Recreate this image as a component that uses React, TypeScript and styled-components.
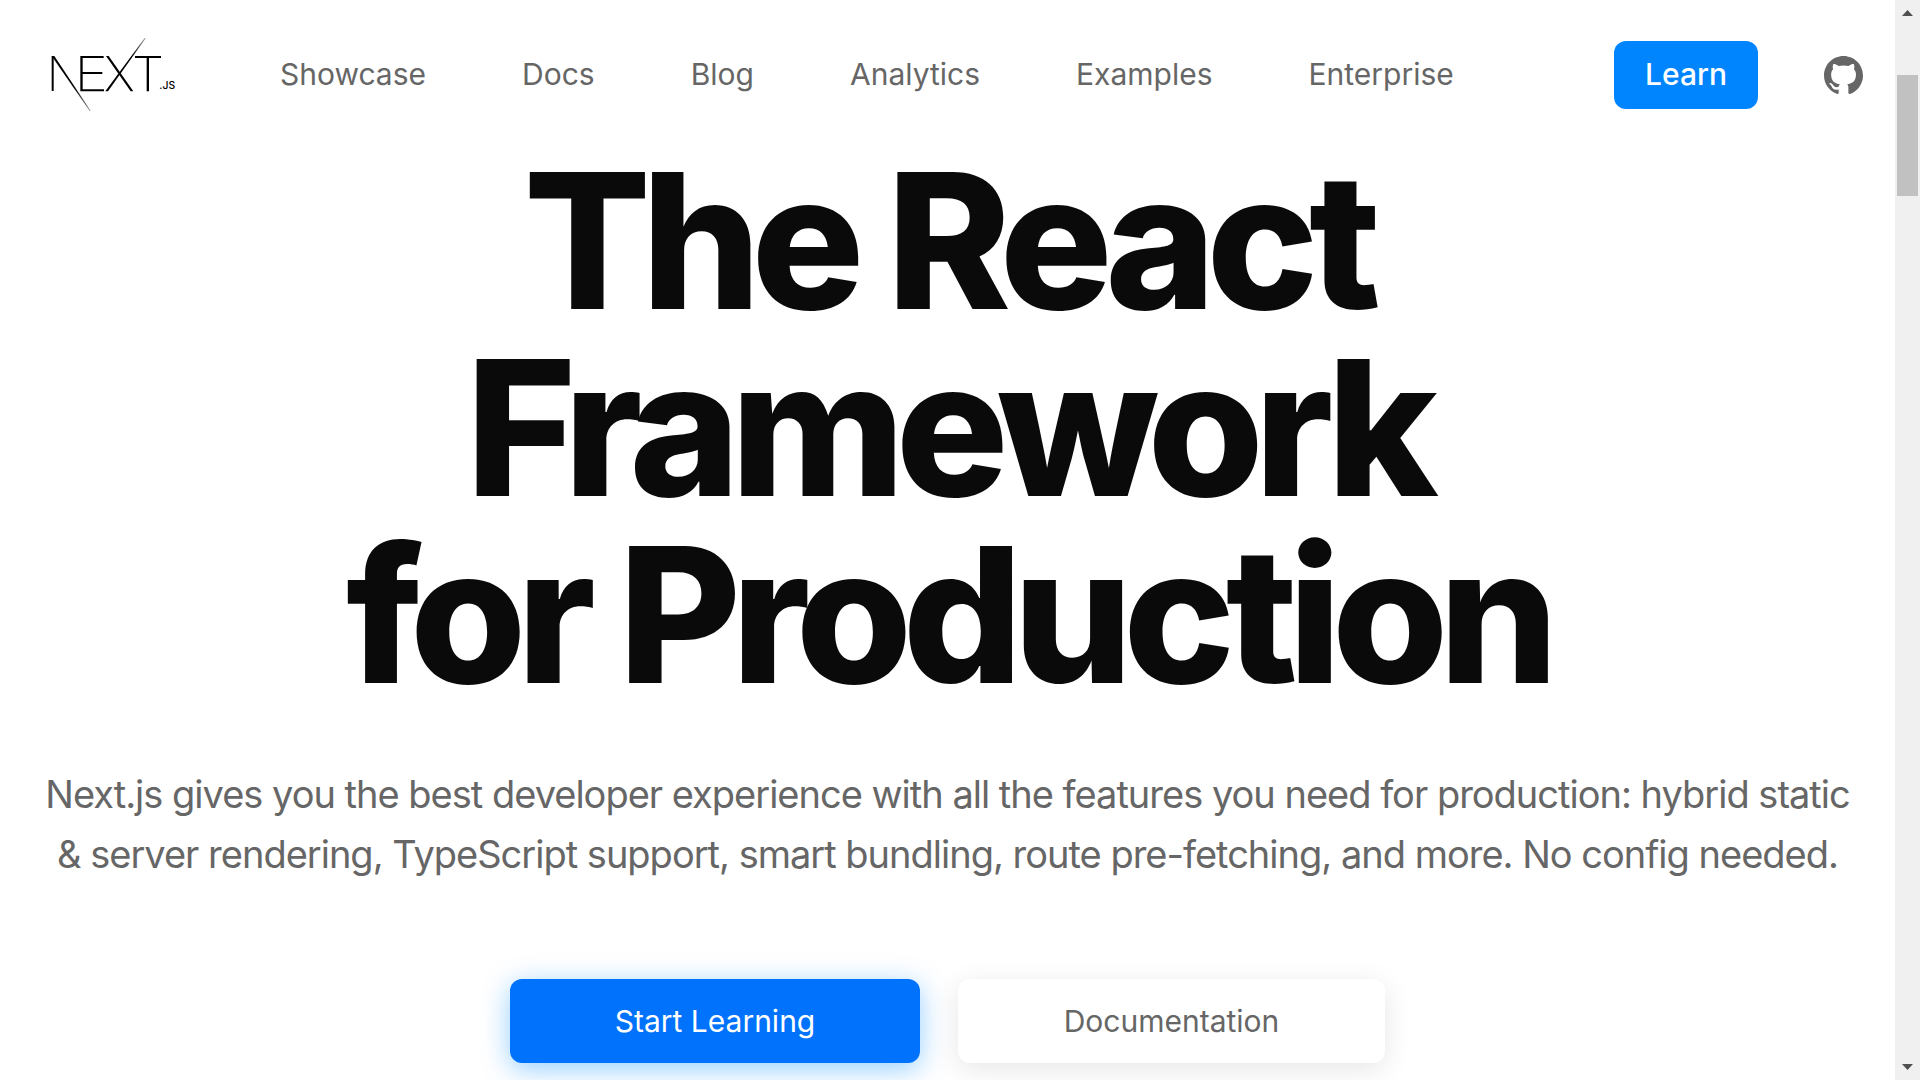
import React from "react";
import styled, { createGlobalStyle } from "styled-components";

const Global = createGlobalStyle`
  *, *::before, *::after { box-sizing: border-box; }
  html { background: #fff; }
  body { margin: 0; font-family: Inter, "Liberation Sans", sans-serif; color: #0a0a0a; }
  a { color: inherit; text-decoration: none; }
  button { cursor: pointer; }
`;

const Shell = styled.div`
  display: flex;
  height: 100vh;
  overflow: hidden;
`;

const Page = styled.div`
  flex: 1;
  min-width: 0;
  overflow: hidden;
`;

const Header = styled.header`
  display: flex;
  align-items: center;
  padding: 37px 32px 34px 50px;
`;

const Logo = styled.a`
  display: block;
  svg { display: block; }
`;

const Nav = styled.nav`
  display: flex;
  gap: 96px;
  margin-left: 102px;
  padding-bottom: 2px;
  font-size: 30px;
  line-height: 40px;
  color: #666;
`;

const Actions = styled.div`
  display: flex;
  align-items: center;
  gap: 66px;
  margin-left: auto;
`;

const Learn = styled.button`
  width: 144px;
  height: 68px;
  padding: 0 0 2px;
  border: 0;
  border-radius: 12px;
  background: #0085ff;
  color: #fff;
  font: 500 30px/40px Inter, "Liberation Sans", sans-serif;
`;

const Github = styled.a`
  display: block;
  color: #666;
  svg { display: block; }
`;

const Hero = styled.main`
  display: flex;
  flex-direction: column;
  align-items: center;
  padding: 0 40px;
  text-align: center;
`;

const Title = styled.h1`
  margin: 0;
  font-size: 188px;
  line-height: 187px;
  font-weight: 800;
  letter-spacing: -0.05em;
`;

const Lead = styled.p`
  margin: 56px 0 0;
  font-size: 38px;
  line-height: 60px;
  letter-spacing: -1px;
  color: #666;
`;

const Buttons = styled.div`
  display: flex;
  gap: 38px;
  margin-top: 95px;
`;

const Cta = styled.button<{ $primary?: boolean }>`
  width: ${p => (p.$primary ? 410 : 427)}px;
  height: 84px;
  border: 0;
  border-radius: 12px;
  font: 400 30px/40px Inter, "Liberation Sans", sans-serif;
  color: ${p => (p.$primary ? "#fff" : "#666")};
  background: ${p => (p.$primary ? "#0072fb" : "#fff")};
  box-shadow: 0 6px 28px ${p => (p.$primary ? "rgba(0, 140, 255, 0.42)" : "rgba(0, 0, 0, 0.1)")};
`;

const Scrollbar = styled.div`
  display: flex;
  flex-direction: column;
  align-items: center;
  width: 25px;
  padding: 10px 2px;
  background: #f0f0f0;
`;

const Thumb = styled.div`
  width: 100%;
  height: 121px;
  margin: 59px 0 auto;
  background: #c1c1c1;
`;

const links = ["Showcase", "Docs", "Blog", "Analytics", "Examples", "Enterprise"];

const NextLogo = () => (
  <svg width="128" height="76" viewBox="60 51 384 228" aria-hidden="true">
    <defs>
      <linearGradient id="tailDown" gradientUnits="userSpaceOnUse" x1="130" y1="200" x2="181" y2="273">
        <stop offset="0" stopColor="#000" />
        <stop offset="1" stopColor="#000" stopOpacity="0.4" />
      </linearGradient>
      <linearGradient id="tailUp" gradientUnits="userSpaceOnUse" x1="305" y1="110" x2="346" y2="54">
        <stop offset="0" stopColor="#000" />
        <stop offset="1" stopColor="#000" stopOpacity="0.4" />
      </linearGradient>
    </defs>
    <path d="M65 108H71V213H65Z" />
    <path d="M65 108H73L182 272L179 273Z" fill="url(#tailDown)" />
    <path d="M151 108H221V114H158V156H217V162H158V208H222V214H151Z" />
    <path d="M228 108H236L310 214H302Z" />
    <path d="M226 214H234L347 55L344 54Z" fill="url(#tailUp)" />
    <path d="M315 108H393V114H357V214H350V114H315Z" />
    <text x="388" y="207" fontSize="31" fontWeight="500" fontFamily="Inter, sans-serif">.JS</text>
  </svg>
);

const GithubMark = () => (
  <svg width="39" height="39" viewBox="0 0 16 16" fill="currentColor" aria-hidden="true">
    <path d="M8 0C3.58 0 0 3.58 0 8c0 3.54 2.29 6.53 5.47 7.59.4.07.55-.17.55-.38 0-.19-.01-.82-.01-1.49-2.01.37-2.53-.49-2.69-.94-.09-.23-.48-.94-.82-1.13-.28-.15-.68-.52-.01-.53.63-.01 1.08.58 1.23.82.72 1.21 1.87.87 2.33.66.07-.52.28-.87.51-1.07-1.78-.2-3.64-.89-3.64-3.95 0-.87.31-1.59.82-2.15-.08-.2-.36-1.02.08-2.12 0 0 .67-.21 2.2.82.64-.18 1.32-.27 2-.27s1.36.09 2 .27c1.53-1.04 2.2-.82 2.2-.82.44 1.1.16 1.92.08 2.12.51.56.82 1.27.82 2.15 0 3.07-1.87 3.75-3.65 3.95.29.25.54.73.54 1.48 0 1.07-.01 1.93-.01 2.2 0 .21.15.46.55.38A8.01 8.01 0 0 0 16 8c0-4.42-3.58-8-8-8Z" />
  </svg>
);

export default function App() {
  return (
    <Shell>
      <Global />
      <Page>
        <Header>
          <Logo href="#" aria-label="Next.js"><NextLogo /></Logo>
          <Nav>
            {links.map(link => <a key={link} href="#">{link}</a>)}
          </Nav>
          <Actions>
            <Learn>Learn</Learn>
            <Github href="#" aria-label="GitHub"><GithubMark /></Github>
          </Actions>
        </Header>
        <Hero>
          <Title>The React<br />Framework<br />for Production</Title>
          <Lead>
            Next.js gives you the best developer experience with all the features you need for
            production: hybrid static &amp; server rendering, TypeScript support, smart bundling,
            route pre-fetching, and more. No config needed.
          </Lead>
          <Buttons>
            <Cta $primary>Start Learning</Cta>
            <Cta>Documentation</Cta>
          </Buttons>
        </Hero>
      </Page>
      <Scrollbar aria-hidden="true">
        <svg width="11" height="6" viewBox="0 0 11 6"><path d="M0 6L5.5 0L11 6Z" fill="#505050" /></svg>
        <Thumb />
        <svg width="11" height="6" viewBox="0 0 11 6"><path d="M0 0L5.5 6L11 0Z" fill="#505050" /></svg>
      </Scrollbar>
    </Shell>
  );
}
